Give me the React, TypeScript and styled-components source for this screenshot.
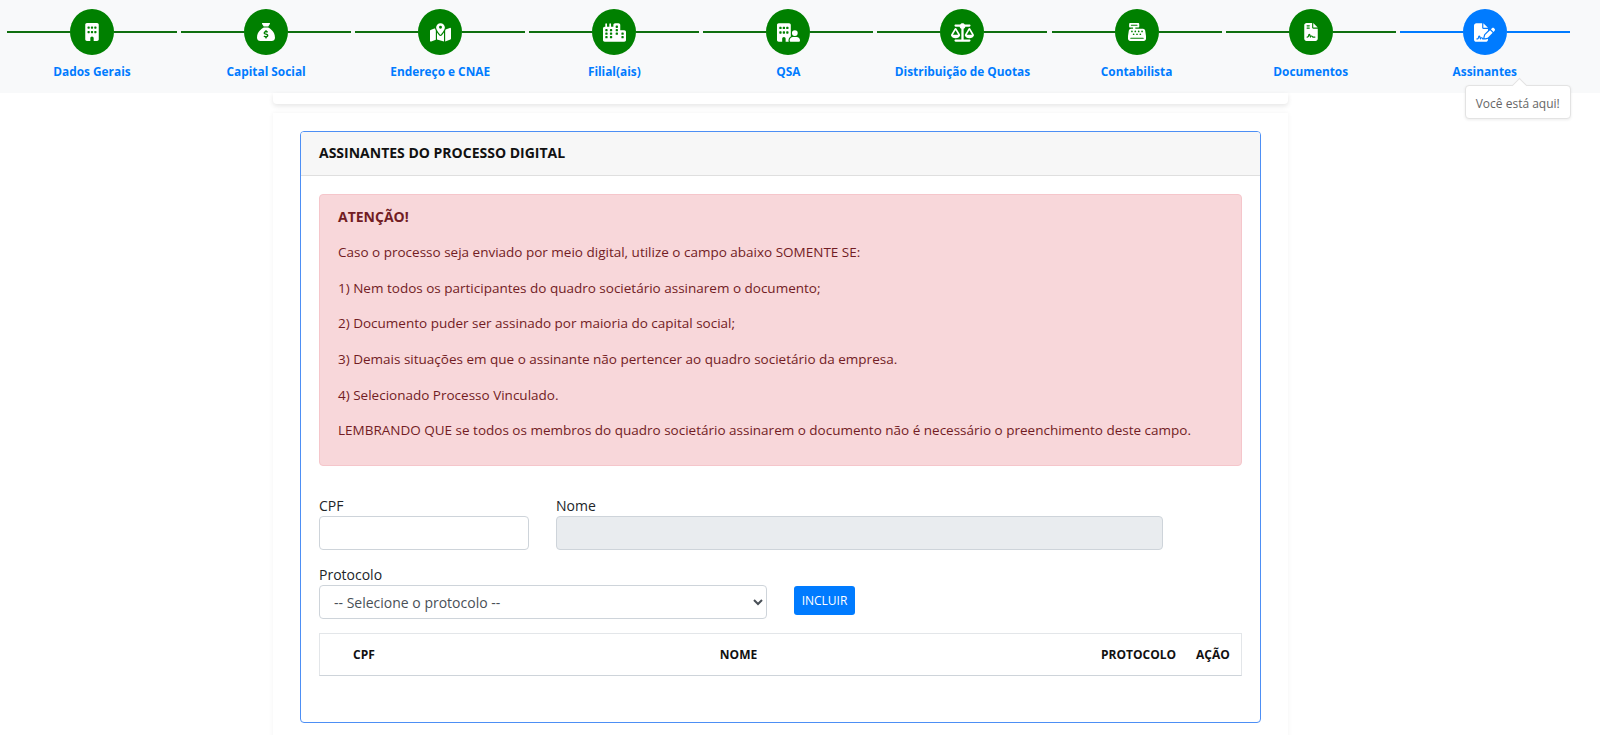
import React from "react";
import styled, { createGlobalStyle } from "styled-components";
import {
  FaBuilding, FaSackDollar, FaMapLocationDot, FaCity, FaBuildingUser, FaScaleBalanced,
  FaCashRegister, FaFileContract, FaFileSignature,
} from "react-icons/fa6";

const Global = createGlobalStyle`
  html, body { margin: 0; padding: 0; background: #fff; height: 735px; overflow: hidden; }
  body { font-family: "Open Sans", "Noto Sans", sans-serif; font-size: 14px; color: #212529; }
  * { box-sizing: border-box; }
`;

const Stepper = styled.nav`
  height: 93px;
  background: #f8f9fa;
  padding: 9px 0 0 7px;
  display: flex;
  gap: 4.1px;
`;
const Step = styled.div`
  width: 170px;
  position: relative;
`;
const StepTrack = styled.div`
  display: flex;
  align-items: center;
  height: 46px;
`;
const Line = styled.span<{ $active?: boolean }>`
  flex: 1;
  height: 2px;
  background: ${(p) => (p.$active ? "#007bff" : "#0f6f0f")};
`;
const Circle = styled.span<{ $active?: boolean }>`
  width: 44px;
  height: 46px;
  border-radius: 50%;
  background: ${(p) => (p.$active ? "#007bff" : "#008000")};
  color: #fff;
  display: flex;
  align-items: center;
  justify-content: center;
`;
const StepLabel = styled.div`
  margin-top: 8px;
  text-align: center;
  font-size: 11.85px;
  line-height: 16px;
  font-weight: 700;
  color: #007bff;
`;
const Tip = styled.div`
  position: absolute;
  top: 76px;
  left: 65px;
  width: 106px;
  height: 34px;
  padding-top: 2px;
  background: #fff;
  border: 1px solid #e3e3e3;
  border-radius: 4px;
  box-shadow: 0 1px 3px rgba(0, 0, 0, 0.08);
  color: #666;
  font-size: 12px;
  display: flex;
  align-items: center;
  justify-content: center;
  z-index: 2;
  &::before {
    content: "";
    position: absolute;
    top: -6px;
    left: 48px;
    width: 10px;
    height: 10px;
    background: #fff;
    border-left: 1px solid #e3e3e3;
    border-top: 1px solid #e3e3e3;
    transform: rotate(45deg);
  }
`;
const Column = styled.main`
  width: 1015px;
  margin-left: 273px;
`;
const TopCard = styled.div`
  height: 11px;
  background: #fff;
  border-radius: 0 0 4px 4px;
  box-shadow: 0 2px 5px rgba(0, 0, 0, 0.1);
`;
const Card = styled.section`
  margin-top: 9px;
  padding: 18px 27px 40px;
  background: #fff;
  box-shadow: 0 0 5px rgba(0, 0, 0, 0.05);
`;
const Box = styled.div`
  height: 592px;
  border: 1px solid #4d8ff5;
  border-radius: 4px;
  overflow: hidden;
`;
const BoxHeader = styled.h2`
  margin: 0;
  height: 44px;
  padding: 0 18px;
  background: #f7f7f7;
  border-bottom: 1px solid #dfdfdf;
  font-size: 14px;
  font-weight: 700;
  color: #111;
  line-height: 42px;
`;
const BoxBody = styled.div`
  padding: 18px 18px 0;
`;
const Alert = styled.div`
  height: 272px;
  padding: 12px 18px;
  background: #f8d7da;
  border: 1px solid #f5c6cb;
  border-radius: 4px;
  color: #721c24;
  font-size: 13.5px;
`;
const AlertTitle = styled.div`
  font-size: 14px;
  font-weight: 700;
  line-height: 20px;
  margin-bottom: 15px;
`;
const AlertLine = styled.p`
  margin: 0 0 15.7px;
  line-height: 20px;
`;
const FormRow = styled.div`
  display: flex;
  margin-top: 30px;
`;
const FormRow2 = styled.div`
  display: flex;
  align-items: flex-start;
  margin-top: 15px;
`;
const Field = styled.label<{ $w: number; $ml?: number }>`
  display: block;
  width: ${(p) => p.$w}px;
  margin-left: ${(p) => p.$ml ?? 0}px;
  font-size: 14px;
  line-height: 20px;
  color: #212529;
`;
const Input = styled.input`
  display: block;
  width: 100%;
  height: 34px;
  border: 1px solid #ced4da;
  border-radius: 4px;
  background: ${(p) => (p.disabled ? "#e9ecef" : "#fff")};
`;
const Select = styled.select`
  display: block;
  width: 100%;
  height: 34px;
  padding: 0 10px;
  border: 1px solid #ced4da;
  border-radius: 4px;
  background: #fff;
  color: #495057;
  font: inherit;
`;
const Button = styled.button`
  width: 61px;
  height: 29px;
  margin: 21px 0 0 27px;
  border: none;
  border-radius: 3px;
  background: #007bff;
  color: #fff;
  font: 12px "Open Sans", sans-serif;
`;
const Table = styled.div`
  display: grid;
  grid-template-columns: 88px 661px 32px 73px 22px 34px 1fr;
  align-items: center;
  height: 43px;
  margin-top: 14px;
  border: 1px solid #e3e6e9;
  border-bottom-color: #ced4da;
  font-size: 12px;
  font-weight: 700;
  color: #111;
`;
const Th = styled.div<{ $col: number; $center?: boolean }>`
  grid-column: ${(p) => p.$col};
  text-align: ${(p) => (p.$center ? "center" : "left")};
  white-space: nowrap;
`;

const steps: [string, React.ReactNode][] = [
  ["Dados Gerais", <FaBuilding size={18} />],
  ["Capital Social", <FaSackDollar size={18} />],
  ["Endereço e CNAE", <FaMapLocationDot size={21} />],
  ["Filial(ais)", <FaCity size={23} />],
  ["QSA", <FaBuildingUser size={23} />],
  ["Distribuição de Quotas", <FaScaleBalanced size={23} />],
  ["Contabilista", <FaCashRegister size={18} />],
  ["Documentos", <FaFileContract size={18} />],
  ["Assinantes", <FaFileSignature size={21} />],
];

const lines = [
  "Caso o processo seja enviado por meio digital, utilize o campo abaixo SOMENTE SE:",
  "1) Nem todos os participantes do quadro societário assinarem o documento;",
  "2) Documento puder ser assinado por maioria do capital social;",
  "3) Demais situações em que o assinante não pertencer ao quadro societário da empresa.",
  "4) Selecionado Processo Vinculado.",
  "LEMBRANDO QUE se todos os membros do quadro societário assinarem o documento não é necessário o preenchimento deste campo.",
];

export default function App() {
  return (
    <>
      <Global />
      <Stepper>
        {steps.map(([label, icon], i) => {
          const active = i === steps.length - 1;
          return (
            <Step key={label}>
              <StepTrack>
                <Line $active={active} />
                <Circle $active={active}>{icon}</Circle>
                <Line $active={active} />
              </StepTrack>
              <StepLabel>{label}</StepLabel>
              {active && <Tip>Você está aqui!</Tip>}
            </Step>
          );
        })}
      </Stepper>
      <Column>
        <TopCard />
        <Card>
          <Box>
            <BoxHeader>ASSINANTES DO PROCESSO DIGITAL</BoxHeader>
            <BoxBody>
              <Alert>
                <AlertTitle>ATENÇÃO!</AlertTitle>
                {lines.map((l) => (
                  <AlertLine key={l}>{l}</AlertLine>
                ))}
              </Alert>
              <FormRow>
                <Field $w={210}>
                  CPF
                  <Input />
                </Field>
                <Field $w={607} $ml={27}>
                  Nome
                  <Input disabled />
                </Field>
              </FormRow>
              <FormRow2>
                <Field $w={448}>
                  Protocolo
                  <Select>
                    <option>-- Selecione o protocolo --</option>
                  </Select>
                </Field>
                <Button>INCLUIR</Button>
              </FormRow2>
              <Table>
                <Th $col={1} $center>CPF</Th>
                <Th $col={2} $center>NOME</Th>
                <Th $col={4}>PROTOCOLO</Th>
                <Th $col={6}>AÇÃO</Th>
              </Table>
            </BoxBody>
          </Box>
        </Card>
      </Column>
    </>
  );
}
